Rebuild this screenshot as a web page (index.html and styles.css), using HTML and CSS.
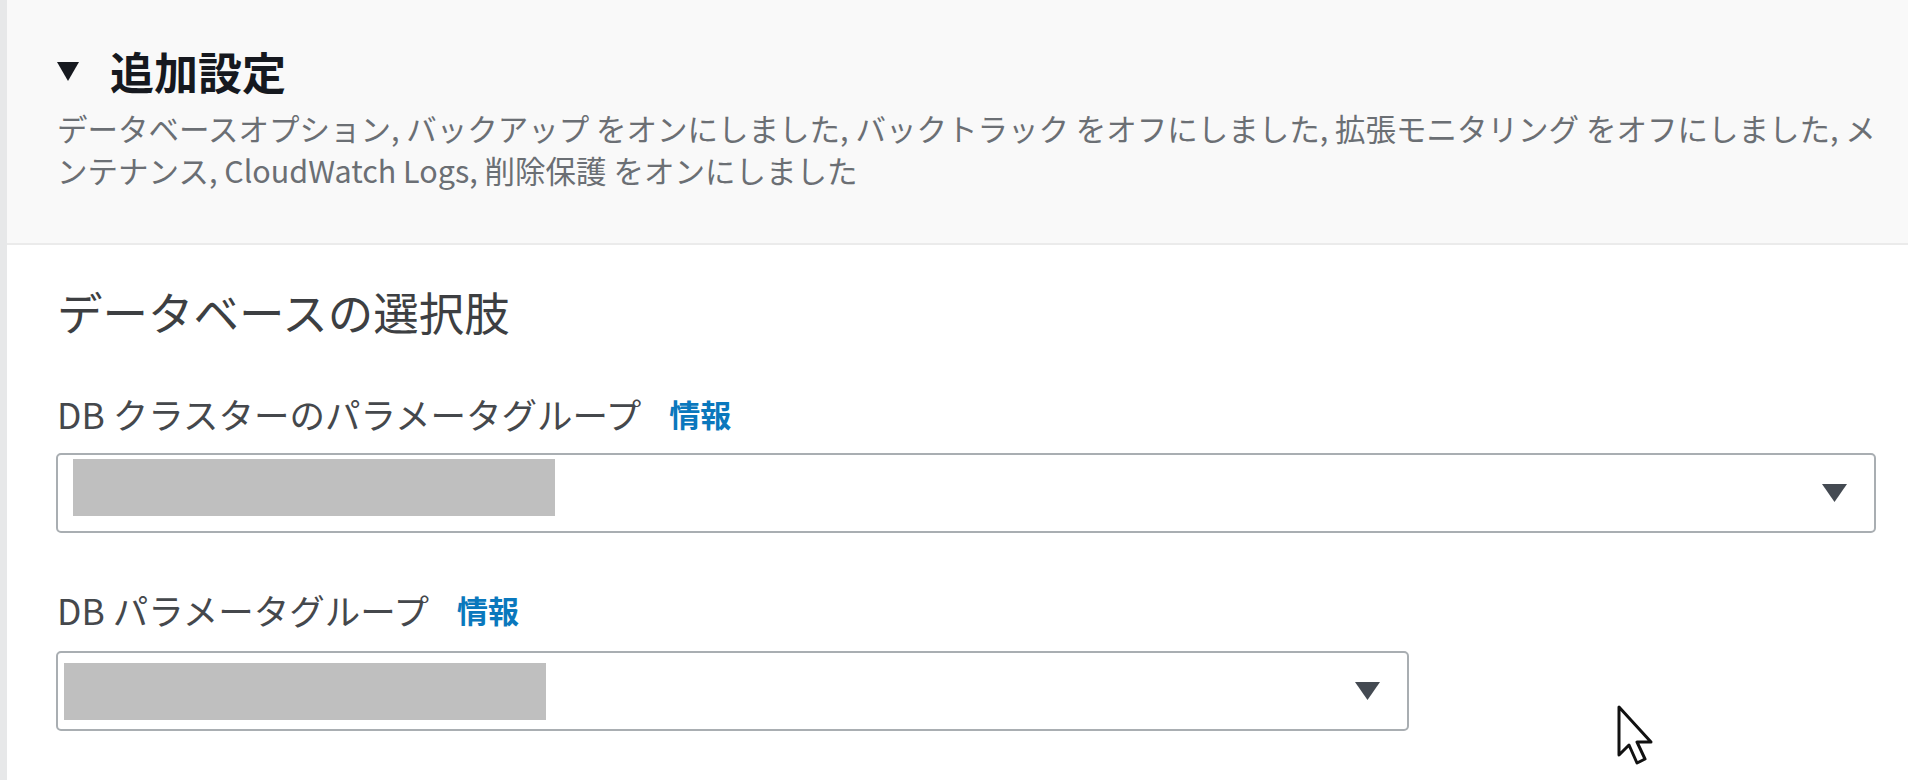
FILE: index.html
```html
<!DOCTYPE html>
<html lang="ja">
<head>
<meta charset="utf-8">
<title>追加設定</title>
<link rel="stylesheet" href="styles.css">
</head>
<body>
<div class="page">
  <div class="rail"></div>
  <main class="main">
    <section class="expander">
      <div class="expander-title">
        <svg class="expander-caret" width="22" height="19" viewBox="0 0 22 19"><path d="M0 0 H22 L11 19 Z" fill="#16191f"/></svg>
        <h2 class="expander-heading">追加設定</h2>
      </div>
      <p class="expander-desc">データベースオプション, バックアップ をオンにしました, バックトラック をオフにしました, 拡張モニタリング をオフにしました, メンテナンス, CloudWatch Logs, 削除保護 をオンにしました</p>
    </section>
    <section class="content">
      <h3 class="section-heading">データベースの選択肢</h3>
      <div class="field">
        <div class="field-label">DB クラスターのパラメータグループ<a class="info-link">情報</a></div>
        <div class="select select-wide">
          <span class="redact redact-a"></span>
          <svg class="select-caret" width="25" height="18" viewBox="0 0 25 18"><path d="M0 0 H25 L12.5 18 Z" fill="#444a52"/></svg>
        </div>
      </div>
      <div class="field field-second">
        <div class="field-label">DB パラメータグループ<a class="info-link">情報</a></div>
        <div class="select select-narrow">
          <span class="redact redact-b"></span>
          <svg class="select-caret" width="25" height="18" viewBox="0 0 25 18"><path d="M0 0 H25 L12.5 18 Z" fill="#444a52"/></svg>
        </div>
      </div>
    </section>
  </main>
  <svg class="cursor" width="42" height="62" viewBox="0 0 42 62"><path d="M2 2 L2 50 L12 40 L20 58 L28 54 L20 37 L34 37 Z" fill="#fff" stroke="#111" stroke-width="3" stroke-linejoin="round"/></svg>
</div>
</body>
</html>
```
FILE: styles.css
```css
html, body {
  margin: 0;
  padding: 0;
  background: #ffffff;
}
body {
  font-family: "Noto Sans CJK JP", "Noto Sans", sans-serif;
  width: 1908px;
  height: 780px;
  overflow: hidden;
}
.page {
  position: relative;
  display: flex;
  height: 780px;
}
.rail {
  width: 7px;
  flex: 0 0 7px;
  background: #e7e8e9;
}
.main {
  flex: 1;
  display: flex;
  flex-direction: column;
}
.expander {
  background: #f9f9f9;
  border-bottom: 2px solid #ebebeb;
  padding: 45px 18px 52px 50px;
}
.expander-title {
  display: flex;
  align-items: center;
  gap: 31px;
  height: 53px;
}
.expander-caret {
  display: block;
}
.expander-heading {
  margin: 0;
  font-size: 44px;
  line-height: 53px;
  font-weight: 700;
  color: #16191f;
}
.expander-desc {
  margin: 9px 0 0 0;
  font-size: 30.5px;
  line-height: 42px;
  color: #6b6f74;
}
.content {
  padding: 39px 33px 0 50px;
  display: flex;
  flex-direction: column;
}
.section-heading {
  margin: 0;
  font-size: 45.5px;
  line-height: 55px;
  font-weight: 400;
  color: #3d3f42;
}
.field {
  margin-top: 54px;
  display: flex;
  flex-direction: column;
  gap: 19px;
}
.field-second {
  margin-top: 56px;
  gap: 21px;
}
.field-label {
  font-size: 35.5px;
  line-height: 41px;
  color: #45484c;
  display: flex;
  align-items: center;
}
.info-link {
  margin-left: 28px;
  font-size: 31px;
  font-weight: 700;
  color: #0a78bd;
}
.select {
  box-sizing: border-box;
  height: 80px;
  border: 2px solid #a9aeb2;
  border-radius: 5px;
  background: #ffffff;
  display: flex;
  align-items: center;
  justify-content: space-between;
  padding-right: 27px;
}
.select-wide {
  width: 1820px;
  margin-left: -1px;
}
.select-narrow {
  width: 1353px;
  margin-left: -1px;
}
.redact {
  display: block;
  height: 57px;
  width: 482px;
  background: #bfbfbf;
}
.redact-a {
  margin-left: 15px;
  align-self: flex-start;
  margin-top: 4px;
}
.redact-b {
  margin-left: 6px;
}
.select-caret {
  display: block;
}
.cursor {
  position: absolute;
  left: 1617px;
  top: 705px;
}
```
